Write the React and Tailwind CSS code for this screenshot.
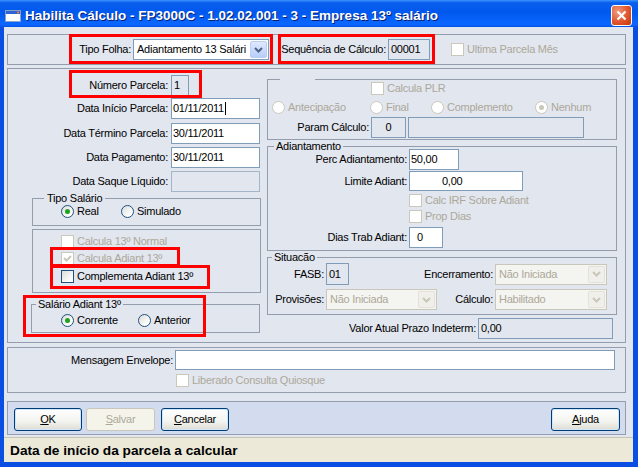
import React from 'react';

const off = 'text-[#aca899]';

function Radio({ checked, disabled, children, className = '' }) {
  return (
    <div className={`flex items-center h-[13px] ${className}`}>
      <span
        className={`w-[13px] h-[13px] shrink-0 rounded-full border flex items-center justify-center ${
          disabled ? 'border-[#cac8bb] bg-white' : 'border-[#1c5180] bg-[linear-gradient(135deg,#dcdcd7,#ffffff_80%)]'
        }`}
      >
        {checked && (
          <span className={`w-[5px] h-[5px] rounded-full ${disabled ? 'bg-[#cac8bb]' : 'bg-[#21a121]'}`} />
        )}
      </span>
      <span className={`ml-[3px] whitespace-nowrap ${disabled ? off : ''}`}>{children}</span>
    </div>
  );
}

function Check({ checked, disabled, children, className = '' }) {
  return (
    <div className={`flex items-center h-[13px] ${className}`}>
      <span
        className={`w-[13px] h-[13px] shrink-0 border flex items-center justify-center ${
          disabled ? 'border-[#cac8bb] bg-white' : 'border-[#1c5180] bg-[linear-gradient(135deg,#dcdcd7,#ffffff_80%)]'
        }`}
      >
        {checked && (
          <svg width="9" height="9" viewBox="0 0 9 9">
            <path d="M1 4l2.5 2.5L8 2" fill="none" stroke={disabled ? '#cac8bb' : '#21a121'} strokeWidth="2" />
          </svg>
        )}
      </span>
      <span className={`ml-[3px] whitespace-nowrap ${disabled ? off : ''}`}>{children}</span>
    </div>
  );
}

function Combo({ className = '', value, disabled }) {
  return (
    <div
      className={`${className} flex items-center border p-[1px] ${
        disabled ? 'border-[#c9c7ba] bg-[#f4f4f0] text-[#aca899]' : 'border-[#7f9db9] bg-white'
      }`}
    >
      <span className="flex-1 pl-[2px] overflow-hidden whitespace-nowrap">{value}</span>
      <span
        className={`w-[17px] h-full shrink-0 rounded-[2px] border flex items-center justify-center ${
          disabled
            ? 'border-[#e2e1da] bg-[#f0efe9]'
            : 'border-[#b9cdf6] bg-[linear-gradient(180deg,#dfe9ff,#b8cdf9)]'
        }`}
      >
        <svg width="9" height="6" viewBox="0 0 9 6">
          <path d="M1 1l3.5 3.5L8 1" fill="none" stroke={disabled ? '#c9c7ba' : '#4d6185'} strokeWidth="2" />
        </svg>
      </span>
    </div>
  );
}

function Btn({ children, disabled, className = '' }) {
  return (
    <div
      className={`${className} h-[23px] rounded-[3px] border flex items-center justify-center ${
        disabled
          ? 'border-[#c9c7ba] bg-[#f5f4ea] text-[#aca899]'
          : 'border-[#003c74] bg-[linear-gradient(180deg,#ffffff,#f3f3ef_60%,#dedcd2)] shadow-[inset_0_0_0_1px_#cee7ff]'
      }`}
    >
      {children}
    </div>
  );
}

const grp = 'border border-[#939dad]';

export default function App() {
  return (
    <div className="relative w-[638px] h-[467px] bg-[#0a4ee4] flex flex-col font-['Liberation_Sans',Arial,sans-serif] text-[11px] leading-[13px] tracking-[-0.25px] text-black overflow-hidden">
      {/* title bar */}
      <div className="h-[27px] shrink-0 flex items-center pt-[4px] bg-[linear-gradient(180deg,#3d95ff,#0a5fec_10%,#0058ee_45%,#0a66ff_85%,#0a66ff_92%,#0050e0_100%)]">
        <svg className="ml-[5px]" width="16" height="12" viewBox="0 0 16 12">
          <rect x="0.5" y="0.5" width="15" height="11" fill="#fff" stroke="#8aa0c8" />
          <rect x="1" y="1" width="14" height="3" fill="#2e64d8" />
          <rect x="12" y="1.5" width="2" height="2" fill="#f07a2a" />
        </svg>
        <div className="ml-[4px] text-white font-bold text-[13.5px] tracking-normal [text-shadow:1px_1px_0_#0a1e6e] whitespace-nowrap">
          Habilita Cálculo - FP3000C - 1.02.02.001 - 3 - Empresa 13º salário
        </div>
        <div className="ml-auto mr-[6px] w-[21px] h-[21px] rounded-[3px] border border-white bg-[radial-gradient(circle_at_30%_30%,#f09a7c,#e0562e_55%,#c2350a)] flex items-center justify-center">
          <svg width="11" height="11" viewBox="0 0 11 11">
            <path d="M1.5 1.5l8 8M9.5 1.5l-8 8" stroke="#fff" strokeWidth="2.2" />
          </svg>
        </div>
      </div>

      {/* client */}
      <div className="ml-[4px] mr-[5px] h-[435px] bg-[#e2e6ef] flex flex-col">
        {/* top group */}
        <div className={`mt-[7px] ml-[3px] w-[619px] h-[31px] ${grp} flex items-center`}>
          <div className="w-[123px] text-right">Tipo Folha:</div>
          <Combo className="ml-[2px] w-[136px] h-[21px]" value="Adiantamento 13 Salári" />
          <div className="w-[117px] text-right">Sequência de Cálculo:</div>
          <div className="ml-[2px] w-[42px] h-[21px] border border-[#7f9db9] pl-[2px] flex items-center">00001</div>
          <Check disabled className="ml-[21px]">Ultima Parcela Mês</Check>
        </div>

        {/* main panel */}
        <div className={`mt-[3px] ml-[3px] w-[619px] h-[275px] ${grp} flex`}>
          {/* left column */}
          <div className="w-[259px] flex flex-col">
            <div className="mt-[6px] h-[21px] flex items-center">
              <div className="w-[160px] text-right">Número Parcela:</div>
              <div className="ml-[3px] w-[18px] h-[21px] border border-[#7f9db9] pl-[2px] flex items-center">1</div>
            </div>
            <div className="mt-[2px] h-[21px] flex items-center">
              <div className="w-[160px] text-right">Data Início Parcela:</div>
              <div className="ml-[3px] w-[89px] h-[21px] border border-[#7f9db9] bg-white pl-[1px] flex items-center">
                01/11/2011<span className="w-[1px] h-[13px] bg-black ml-[1px]" />
              </div>
            </div>
            <div className="mt-[4px] h-[21px] flex items-center">
              <div className="w-[160px] text-right">Data Término Parcela:</div>
              <div className="ml-[3px] w-[89px] h-[21px] border border-[#7f9db9] bg-white pl-[1px] flex items-center">30/11/2011</div>
            </div>
            <div className="mt-[3px] h-[21px] flex items-center">
              <div className="w-[160px] text-right">Data Pagamento:</div>
              <div className="ml-[3px] w-[89px] h-[21px] border border-[#7f9db9] bg-white pl-[1px] flex items-center">30/11/2011</div>
            </div>
            <div className="mt-[3px] h-[21px] flex items-center">
              <div className="w-[160px] text-right">Data Saque Líquido:</div>
              <div className="ml-[3px] w-[89px] h-[21px] border border-[#a5b5c8] bg-[#e2e6ef]" />
            </div>

            <fieldset className={`ml-[24px] w-[229px] ${grp} pb-[7px]`}>
              <legend className="ml-[11px] px-[3px]">Tipo Salário</legend>
              <div className="flex pl-[28px]">
                <Radio checked className="w-[60px]">Real</Radio>
                <Radio>Simulado</Radio>
              </div>
            </fieldset>

            <div className={`mt-[3px] ml-[24px] w-[229px] h-[64px] ${grp} pl-[28px] flex flex-col`}>
              <Check disabled className="mt-[5px]">Calcula 13º Normal</Check>
              <Check disabled checked className="mt-[4px]">Calcula Adiant 13º</Check>
              <Check className="mt-[5px]">Complementa Adiant 13º</Check>
            </div>

            <fieldset className={`mt-[5px] ml-[23px] w-[229px] ${grp} pb-[5px]`}>
              <legend className="ml-[4px] px-[2px]">Salário Adiant 13º</legend>
              <div className="mt-[3px] flex pl-[29px]">
                <Radio checked className="w-[77px]">Corrente</Radio>
                <Radio>Anterior</Radio>
              </div>
            </fieldset>
          </div>

          {/* right column */}
          <div className="w-[350px] flex flex-col">
            <fieldset className={`mt-[10px] ${grp} pb-[1px]`}>
              <legend className="ml-[12px] w-[35px] h-[1px] p-0" />
              <Check disabled className="mt-[2px] ml-[103px]">Calcula PLR</Check>
              <div className="mt-[6px] pl-[4px] flex">
                <Radio disabled className="w-[98px]">Antecipação</Radio>
                <Radio disabled className="w-[61px]">Final</Radio>
                <Radio disabled className="w-[104px]">Complemento</Radio>
                <Radio disabled checked>Nenhum</Radio>
              </div>
              <div className="mt-[3px] h-[21px] flex items-center">
                <div className="w-[101px] text-right">Param Cálculo:</div>
                <div className="ml-[2px] w-[35px] h-[21px] border border-[#7f9db9] flex items-center justify-center">0</div>
                <div className="ml-[2px] w-[176px] h-[21px] border border-[#7f9db9]" />
              </div>
            </fieldset>

            <fieldset className={`${grp} pb-[2px]`}>
              <legend className="ml-[6px] px-[2px]">Adiantamento</legend>
              <div className="-mt-[4px] h-[21px] flex items-center">
                <div className="w-[139px] text-right">Perc Adiantamento:</div>
                <div className="ml-[2px] w-[50px] h-[21px] border border-[#7f9db9] bg-white pl-[1px] flex items-center">50,00</div>
              </div>
              <div className="mt-[1px] h-[20px] flex items-center">
                <div className="w-[139px] text-right">Limite Adiant:</div>
                <div className="ml-[2px] w-[114px] h-[20px] border border-[#7f9db9] bg-white pl-[32px] flex items-center">0,00</div>
              </div>
              <Check disabled className="mt-[3px] ml-[141px]">Calc IRF Sobre Adiant</Check>
              <Check disabled className="mt-[3px] ml-[141px]">Prop Dias</Check>
              <div className="mt-[4px] h-[21px] flex items-center">
                <div className="w-[139px] text-right">Dias Trab Adiant:</div>
                <div className="ml-[2px] w-[34px] h-[21px] border border-[#7f9db9] bg-white pl-[7px] flex items-center">0</div>
              </div>
            </fieldset>

            <fieldset className={`${grp} pb-[4px]`}>
              <legend className="ml-[4px] px-[2px]">Situacão</legend>
              <div className="-mt-[1px] h-[22px] flex items-center">
                <div className="w-[56px] text-right">FASB:</div>
                <div className="ml-[2px] w-[23px] h-[22px] border border-[#7f9db9] pl-[2px] flex items-center">01</div>
                <div className="w-[144px] text-right">Encerramento:</div>
                <Combo disabled className="ml-[2px] w-[112px] h-[21px]" value="Não Iniciada" />
              </div>
              <div className="mt-[4px] h-[21px] flex items-center">
                <div className="w-[56px] text-right">Provisões:</div>
                <Combo disabled className="ml-[2px] w-[111px] h-[21px]" value="Não Iniciada" />
                <div className="w-[56px] text-right">Cálculo:</div>
                <Combo disabled className="ml-[2px] w-[112px] h-[21px]" value="Habilitado" />
              </div>
            </fieldset>

            <div className="mt-[3px] h-[21px] flex items-center">
              <div className="w-[209px] text-right">Valor Atual Prazo Indeterm:</div>
              <div className="ml-[2px] w-[135px] h-[21px] border border-[#7f9db9] pl-[2px] flex items-center">0,00</div>
            </div>
          </div>
        </div>

        {/* message panel */}
        <div className={`mt-[4px] ml-[3px] w-[619px] h-[46px] ${grp} flex flex-col`}>
          <div className="mt-[2px] h-[20px] flex items-center">
            <div className="w-[165px] text-right">Mensagem Envelope:</div>
            <div className="ml-[2px] w-[440px] h-[20px] border border-[#7f9db9] bg-white" />
          </div>
          <Check disabled className="mt-[4px] ml-[168px]">Liberado Consulta Quiosque</Check>
        </div>

        {/* button bar */}
        <div className={`mt-[8px] ml-[3px] w-[619px] h-[34px] ${grp} bg-[#d3dbee] flex items-start pt-[6px] pl-[6px] pr-[5px]`}>
          <Btn className="w-[68px]"><span><span className="underline">O</span>K</span></Btn>
          <Btn disabled className="ml-[4px] w-[69px]"><span><span className="underline">S</span>alvar</span></Btn>
          <Btn className="ml-[6px] w-[68px]"><span><span className="underline">C</span>ancelar</span></Btn>
          <Btn className="ml-auto w-[69px]"><span><span className="underline">A</span>juda</span></Btn>
        </div>

        {/* status bar */}
        <div className="mt-[2px] h-[25px] bg-[#ece9d8] border-t border-[#c7c4b4] flex items-center pl-[6px] font-bold text-[13.7px] tracking-normal">
          Data de início da parcela a calcular
        </div>
      </div>

      {/* red highlight annotations */}
      <div className="absolute left-[69px] top-[34px] w-[204px] h-[30px] border-[3px] border-[#ff0000]" />
      <div className="absolute left-[278px] top-[34px] w-[157px] h-[30px] border-[3px] border-[#ff0000]" />
      <div className="absolute left-[69px] top-[70px] w-[133px] h-[28px] border-[3px] border-[#ff0000]" />
      <div className="absolute left-[50px] top-[247px] w-[130px] h-[20px] border-[3px] border-[#ff0000]" />
      <div className="absolute left-[50px] top-[265px] w-[160px] h-[24px] border-[3px] border-[#ff0000]" />
      <div className="absolute left-[23px] top-[295px] w-[183px] h-[42px] border-[3px] border-[#ff0000]" />
    </div>
  );
}
